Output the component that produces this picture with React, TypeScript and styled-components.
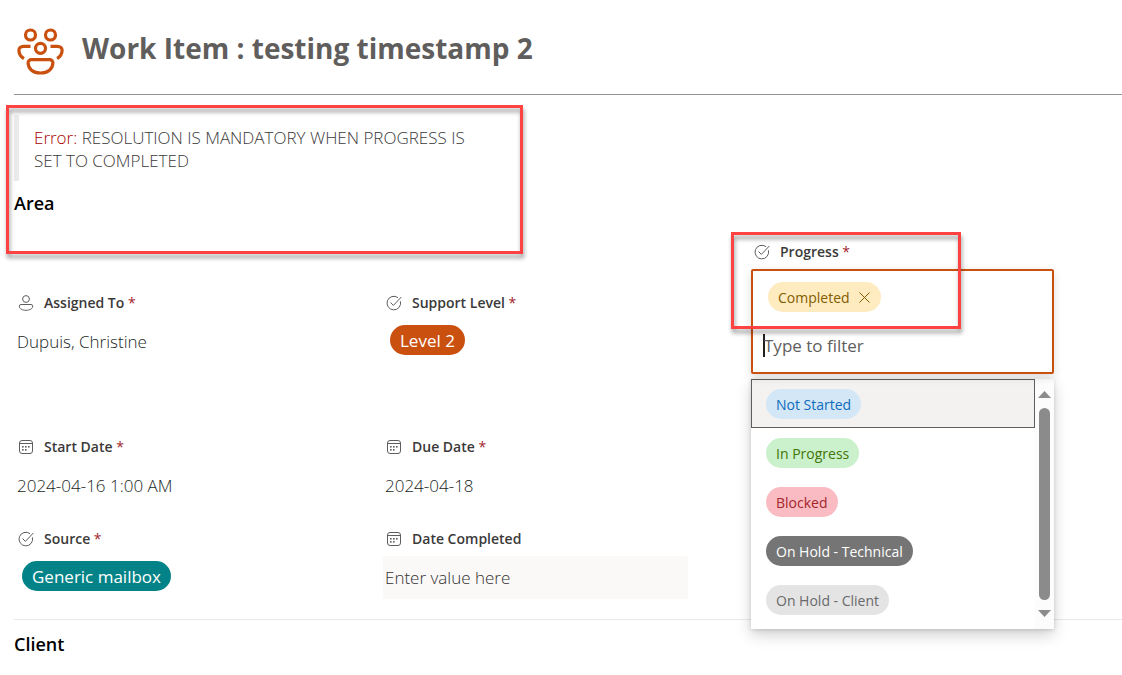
import React from "react";
import styled, { createGlobalStyle, css } from "styled-components";

const GlobalStyle = createGlobalStyle`
  * { box-sizing: border-box; }
  body {
    margin: 0;
    background: #fff;
    color: #323130;
    font-family: "Open Sans", "Noto Sans", sans-serif;
    font-size: 16px;
  }
  h1, h2, p { margin: 0; }
  button, input { font: inherit; color: inherit; border: 0; background: none; padding: 0; }
`;

const Page = styled.main`
  padding: 0 0 20px 14px;
  overflow-x: hidden;
`;

const Header = styled.header`
  display: flex;
  align-items: center;
  gap: 18px;
  height: 95px;
  padding: 8px 0 0 2px;
  border-bottom: 1px solid #979593;
`;

const Title = styled.h1`
  font-size: 28px;
  line-height: 36px;
  font-weight: 700;
  color: #605e5c;
  padding-bottom: 6px;
`;

const NoticeArea = styled.section`
  position: relative;
  padding-top: 20px;
  min-height: 196px;
`;

const Notice = styled.div`
  max-width: 480px;
  min-height: 66px;
  padding: 11px 16px 9px 15px;
  border-left: 5px solid #eaeaea;
  font-size: 17px;
  line-height: 23px;
  font-weight: 300;
  color: #3b3a39;
`;

const ErrorWord = styled.span`
  color: #a80000;
`;

const SectionTitle = styled.h2`
  font-size: 18px;
  line-height: 24px;
  font-weight: 600;
  color: #000;
  padding-top: 10px;
`;

const Highlight = styled.div<{ $place: "notice" | "progress" }>`
  position: absolute;
  border: 3px solid #ff4343;
  filter: drop-shadow(1px 4px 2px rgba(0, 0, 0, 0.4));
  pointer-events: none;
  ${({ $place }) =>
    $place === "notice"
      ? css`left: -8px; top: 10px; width: 517px; height: 149px;`
      : css`left: -20px; top: -8px; width: 230px; height: 97px;`}
`;

const Fields = styled.div`
  display: grid;
  grid-template-columns: repeat(3, 1fr);
  grid-template-rows: minmax(144px, auto) minmax(92px, auto);
  padding: 0 3px 20px 1px;
`;

const Field = styled.div`
  position: relative;
  display: flex;
  flex-direction: column;
  gap: 5px;
`;

const labelRow = css`
  display: flex;
  align-items: center;
  gap: 10px;
  height: 24px;
  padding-left: 3px;
  font-size: 14px;
  line-height: 24px;
  font-weight: 600;
  color: #3b3a39;
`;

const Caption = styled.div`${labelRow}`;
const InputLabel = styled.label`${labelRow}`;

const Star = styled.span`
  color: #a4262c;
  font-weight: 400;
`;

const Value = styled.div<{ $chip?: boolean }>`
  display: flex;
  align-items: center;
  height: 43px;
  padding: ${({ $chip }) => ($chip ? "0 0 3px 7px" : "0 0 0 2px")};
  font-size: 17px;
  font-weight: 300;
  color: #201f1e;
`;

const DateInput = styled.input`
  width: calc(100% - 63px);
  height: 43px;
  padding: 0 2px;
  border-radius: 2px;
  background: #faf9f8;
  font-size: 17px;
  font-weight: 300;
  &::placeholder { color: #323130; opacity: 1; }
`;

const Chip = styled.span<{ $bg: string; $fg: string; $large?: boolean }>`
  display: inline-flex;
  align-items: center;
  gap: 8px;
  height: 30px;
  padding: 0 10px;
  border-radius: 15px;
  background: ${({ $bg }) => $bg};
  color: ${({ $fg }) => $fg};
  font-size: ${({ $large }) => ($large ? 17 : 14)}px;
  font-weight: 400;
  white-space: nowrap;
`;

const Popover = styled.div`
  position: absolute;
  left: 0;
  top: -51px;
  width: 303px;
  display: flex;
  flex-direction: column;
  gap: 5px;
`;

const Picker = styled.div`
  position: relative;
  height: 105px;
  padding: 11px 15px;
  border: 2px solid #ca5010;
  border-radius: 2px;
  background: #fff;
  box-shadow: 0 3px 10px rgba(0, 0, 0, 0.14);
`;

const FilterRow = styled.div`
  display: flex;
  align-items: center;
  height: 36px;
  margin: 15px 0 0 -5px;
`;

const Caret = styled.span`
  width: 2px;
  height: 23px;
  margin-right: -1px;
  background: #201f1e;
`;

const FilterInput = styled.input`
  flex: 1;
  min-width: 0;
  font-size: 17px;
  font-weight: 400;
  outline: none;
  &::placeholder { color: #605e5c; opacity: 1; }
`;

const RemoveButton = styled.button`
  display: flex;
  cursor: pointer;
`;

const Dropdown = styled.div`
  display: flex;
  height: 250px;
  background: #fff;
  box-shadow: 0 6px 14px rgba(0, 0, 0, 0.18), 0 1px 4px rgba(0, 0, 0, 0.14);
`;

const Options = styled.div`
  flex: 1;
  display: flex;
  flex-direction: column;
`;

const Option = styled.button<{ $active?: boolean }>`
  display: flex;
  align-items: center;
  height: 49px;
  padding: 1px 14px 0;
  border: 1px solid ${({ $active }) => ($active ? "#605e5c" : "transparent")};
  background: ${({ $active }) => ($active ? "#f3f2f1" : "transparent")};
  cursor: pointer;
`;

const ScrollBar = styled.div`
  display: flex;
  flex-direction: column;
  align-items: center;
  gap: 10px;
  width: 19px;
  padding: 12px 0;
  background: #fcfcfc;
`;

const Thumb = styled.div`
  flex: 1;
  width: 11px;
  border-radius: 6px;
  background: #8b8b8b;
`;

const Footer = styled.section`
  border-top: 1px solid #eaeaea;
  padding-top: 2px;
`;

const iconBase = {
  width: 16,
  height: 16,
  viewBox: "0 0 16 16",
  fill: "none",
  stroke: "#605e5c",
  "aria-hidden": true,
} as const;

const PersonIcon = () => (
  <svg {...iconBase}>
    <circle cx="8" cy="4" r="3.400" />
    <path d="M3 9.500h10a1.700 1.700 0 0 1 1.700 1.700c0 2.400-2.800 4.100-6.700 4.100s-6.700-1.700-6.700-4.100A1.700 1.700 0 0 1 3 9.500z" />
  </svg>
);

const CheckIcon = () => (
  <svg {...iconBase}>
    <path d="M12 2.700A6.800 6.800 0 1 0 14.400 6.300" />
    <path d="M4.500 7.500 7.400 10.400 15.300 2" />
  </svg>
);

const CalendarIcon = () => (
  <svg {...iconBase}>
    <rect x="1.500" y="1.500" width="13" height="13" rx="2.500" />
    <path d="M1.500 4.500h13" />
    <g fill="#605e5c" stroke="none">
      <rect x="4" y="7" width="1.600" height="1.600" />
      <rect x="7" y="7" width="1.600" height="1.600" />
      <rect x="10" y="7" width="1.600" height="1.600" />
      <rect x="4" y="10" width="1.600" height="1.600" />
      <rect x="7" y="10" width="1.600" height="1.600" />
    </g>
  </svg>
);

const TeamIcon = () => (
  <svg width="48" height="48" viewBox="0 0 48 48" fill="none" stroke="#ca5010" strokeWidth="3.200" aria-hidden>
    <circle cx="14.500" cy="8" r="5" />
    <circle cx="34.500" cy="8" r="5" />
    <circle cx="24.500" cy="21.300" r="5" />
    <path d="M14.500 19.300H7.500c-2.800 0-4.600 1.800-4.600 4 0 3.300 1.700 6.300 5 8.400" />
    <path d="M34.500 19.300h7c2.800 0 4.600 1.800 4.600 4 0 3.300-1.700 6.300-5 8.400" />
    <path d="M15.300 32.600h18.400a3.200 3.200 0 0 1 3.200 3.200c0 6-5 10.200-12.400 10.200s-12.400-4.200-12.400-10.200a3.200 3.200 0 0 1 3.200-3.200z" />
  </svg>
);

const icons = { person: PersonIcon, check: CheckIcon, calendar: CalendarIcon };

function CaptionContent({ icon, text, required }: { icon: keyof typeof icons; text: string; required?: boolean }) {
  const Icon = icons[icon];
  return (
    <>
      <Icon />
      <span>
        {text} {required && <Star>*</Star>}
      </span>
    </>
  );
}

const options = [
  { text: "Not Started", bg: "#d4e7f6", fg: "#0f6cbd" },
  { text: "In Progress", bg: "#caf0cc", fg: "#437406" },
  { text: "Blocked", bg: "#fabbc3", fg: "#a4262c" },
  { text: "On Hold - Technical", bg: "#757575", fg: "#ffffff" },
  { text: "On Hold - Client", bg: "#e4e4e4", fg: "#69696b" },
];

export default function App() {
  return (
    <>
      <GlobalStyle />
      <Page>
        <Header>
          <TeamIcon />
          <Title>Work Item : testing timestamp 2</Title>
        </Header>

        <NoticeArea>
          <Notice role="alert">
            <ErrorWord>Error:</ErrorWord> RESOLUTION IS MANDATORY WHEN PROGRESS IS SET TO COMPLETED
          </Notice>
          <SectionTitle>Area</SectionTitle>
          <Highlight $place="notice" />
        </NoticeArea>

        <Fields>
          <Field>
            <Caption><CaptionContent icon="person" text="Assigned To" required /></Caption>
            <Value>Dupuis, Christine</Value>
          </Field>
          <Field>
            <Caption><CaptionContent icon="check" text="Support Level" required /></Caption>
            <Value $chip><Chip $large $bg="#ca5010" $fg="#fff">Level 2</Chip></Value>
          </Field>
          <Field>
            <Popover>
              <InputLabel htmlFor="progress">
                <CaptionContent icon="check" text="Progress" required />
              </InputLabel>
              <Picker>
                <Chip $bg="#ffebc0" $fg="#835c00">
                  Completed
                  <RemoveButton type="button" aria-label="Remove Completed">
                    <svg width="13" height="13" viewBox="0 0 13 13" stroke="#835c00" fill="none">
                      <path d="M1.500 1.500l10 10M11.500 1.500l-10 10" />
                    </svg>
                  </RemoveButton>
                </Chip>
                <FilterRow>
                  <Caret />
                  <FilterInput id="progress" placeholder="Type to filter" />
                </FilterRow>
              </Picker>
              <Dropdown>
                <Options role="listbox" aria-label="Progress">
                  {options.map((o, i) => (
                    <Option key={o.text} type="button" role="option" aria-selected={false} $active={i === 0}>
                      <Chip $bg={o.bg} $fg={o.fg}>{o.text}</Chip>
                    </Option>
                  ))}
                </Options>
                <ScrollBar aria-hidden>
                  <svg width="13" height="7" viewBox="0 0 13 7" fill="#8b8b8b"><path d="M0 7 6.500 0 13 7z" /></svg>
                  <Thumb />
                  <svg width="13" height="7" viewBox="0 0 13 7" fill="#8b8b8b"><path d="M0 0 6.500 7 13 0z" /></svg>
                </ScrollBar>
              </Dropdown>
              <Highlight $place="progress" />
            </Popover>
          </Field>

          <Field>
            <Caption><CaptionContent icon="calendar" text="Start Date" required /></Caption>
            <Value>2024-04-16 1:00 AM</Value>
          </Field>
          <Field>
            <Caption><CaptionContent icon="calendar" text="Due Date" required /></Caption>
            <Value>2024-04-18</Value>
          </Field>
          <Field />

          <Field>
            <Caption><CaptionContent icon="check" text="Source" required /></Caption>
            <Value $chip><Chip $large $bg="#038387" $fg="#fff">Generic mailbox</Chip></Value>
          </Field>
          <Field>
            <InputLabel htmlFor="date-completed">
              <CaptionContent icon="calendar" text="Date Completed" />
            </InputLabel>
            <DateInput id="date-completed" placeholder="Enter value here" />
          </Field>
        </Fields>

        <Footer>
          <SectionTitle>Client</SectionTitle>
        </Footer>
      </Page>
    </>
  );
}
